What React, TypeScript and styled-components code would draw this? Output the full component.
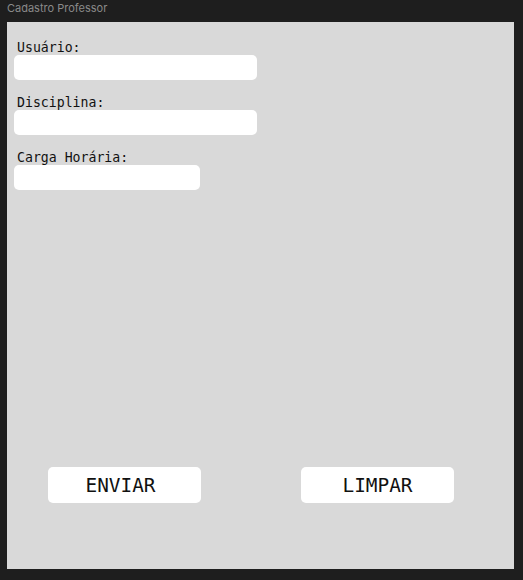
import React from "react";
import styled, { createGlobalStyle } from "styled-components";

const Global = createGlobalStyle`
  html, body { margin: 0; padding: 0; background: #1e1e1e; }
  body { width: 523px; height: 580px; overflow: hidden; }
`;

const Window = styled.div`
  width: 523px;
  height: 580px;
  background: #1e1e1e;
  display: flex;
  flex-direction: column;
`;

const TitleBar = styled.div`
  height: 22px;
  padding-left: 7px;
  font-family: Inter, "Noto Sans", sans-serif;
  font-size: 11px;
  line-height: 16px;
  color: #8a8a8a;
  box-sizing: border-box;
`;

const Panel = styled.div`
  margin-left: 7px;
  width: 507px;
  height: 547px;
  background: #d9d9d9;
  box-sizing: border-box;
  padding: 17px 0 66px 7px;
  display: flex;
  flex-direction: column;
`;

const Fields = styled.div`
  display: flex;
  flex-direction: column;
  gap: 14px;
`;

const Field = styled.label`
  display: flex;
  flex-direction: column;
`;

const Label = styled.span`
  font-family: "DejaVu Sans Mono", "Liberation Mono", monospace;
  font-size: 13.2px;
  line-height: 15px;
  padding-top: 1px;
  color: #111;
  padding-left: 3px;
`;

const Input = styled.input<{ $w: number }>`
  width: ${(p) => p.$w}px;
  height: 25px;
  box-sizing: border-box;
  border: none;
  border-radius: 5px;
  background: #ffffff;
  outline: none;
  padding: 0 6px;
  font-family: "DejaVu Sans Mono", monospace;
  font-size: 13px;
`;

const Spacer = styled.div`
  flex: 1;
`;

const Buttons = styled.div`
  display: flex;
  padding-left: 34px;
  gap: 100px;
`;

const Button = styled.button<{ $offset?: number }>`
  width: 153px;
  height: 36px;
  border: none;
  border-radius: 5px;
  background: #ffffff;
  font-family: "DejaVu Sans Mono", "Liberation Mono", monospace;
  font-size: 19.4px;
  color: #111;
  padding: 0 ${(p) => p.$offset ?? 0}px 0 0;
  cursor: pointer;
`;

export default function App() {
  return (
    <Window>
      <Global />
      <TitleBar>Cadastro Professor</TitleBar>
      <Panel>
        <Fields>
          <Field>
            <Label>Usuário:</Label>
            <Input $w={243} />
          </Field>
          <Field>
            <Label>Disciplina:</Label>
            <Input $w={243} />
          </Field>
          <Field>
            <Label>Carga Horária:</Label>
            <Input $w={186} />
          </Field>
        </Fields>
        <Spacer />
        <Buttons>
          <Button $offset={8}>ENVIAR</Button>
          <Button>LIMPAR</Button>
        </Buttons>
      </Panel>
    </Window>
  );
}
